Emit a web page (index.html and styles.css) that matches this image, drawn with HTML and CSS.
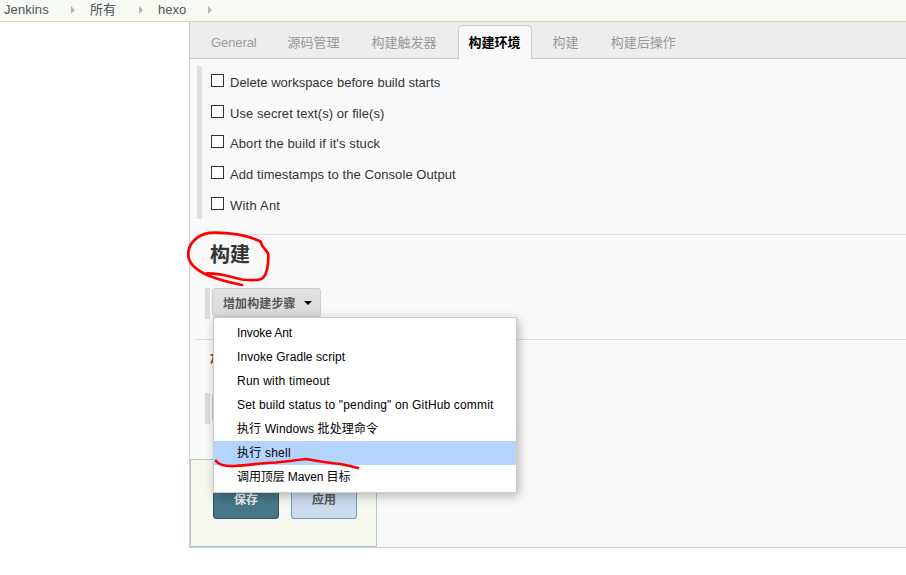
FILE: index.html
```html
<!DOCTYPE html>
<html lang="zh-CN">
<head>
<meta charset="utf-8">
<title>hexo Config [Jenkins]</title>
<link rel="stylesheet" href="styles.css">
</head>
<body>
<nav class="breadcrumbs">
  <a class="crumb crumb-home">Jenkins</a><i class="arrow"></i>
  <a class="crumb crumb-all">所有</a><i class="arrow"></i>
  <a class="crumb crumb-job">hexo</a><i class="arrow"></i>
</nav>
<main class="panel">
  <div class="tabs">
    <span class="tab tab-general">General</span>
    <span class="tab">源码管理</span>
    <span class="tab">构建触发器</span>
    <span class="tab active">构建环境</span>
    <span class="tab">构建</span>
    <span class="tab">构建后操作</span>
  </div>
  <div class="options">
    <label class="option"><i class="box"></i><span>Delete workspace before build starts</span></label>
    <label class="option"><i class="box"></i><span class="track-sm">Use secret text(s) or file(s)</span></label>
    <label class="option"><i class="box"></i><span class="track-md">Abort the build if it's stuck</span></label>
    <label class="option"><i class="box"></i><span class="track-sm">Add timestamps to the Console Output</span></label>
    <label class="option"><i class="box"></i><span class="track-lg">With Ant</span></label>
  </div>
  <section class="section">
    <h2 class="heading">构建</h2>
    <div class="step">
      <button class="add">增加构建步骤<i class="caret"></i></button>
      <div class="menu">
        <div class="item track-neg">Invoke Ant</div>
        <div class="item track-sm">Invoke Gradle script</div>
        <div class="item track-lg">Run with timeout</div>
        <div class="item track-menu">Set build status to "pending" on GitHub commit</div>
        <div class="item track-md">执行 Windows 批处理命令</div>
        <div class="item selected track-lg">执行 shell</div>
        <div class="item track-neg">调用顶层 Maven 目标</div>
      </div>
    </div>
  </section>
  <section class="section">
    <h2 class="heading heading-post">构</h2>
    <div class="step">
      <button class="add"></button>
    </div>
  </section>
  <div class="footer">
    <button class="btn save">保存</button>
    <button class="btn apply">应用</button>
  </div>
</main>
<svg class="ink" width="906" height="575" viewBox="0 0 906 575">
  <path d="M260.500 241.500C249 236 230 232 209 232.800C195 235.500 187.500 245 188.300 256C189.500 265 197 270 207 275C219 280 232 283 242 285M206 273.500C220 273 231 277 242 279.500C251 280.500 259 281 263 278C267.500 273 268.500 262 268.300 254C266 249 262 248 260.500 241.500"/>
  <path d="M216 461C219 465 225 466.500 235 466C250 465.500 262 462.500 276 462.500C287 461.500 295 460.500 306 459C320 461.500 329 463 340 464C347 465.500 352 466 358 468"/>
</svg>
</body>
</html>
```
FILE: styles.css
```css
* { box-sizing: border-box; }
body {
  margin: 0;
  height: 575px;
  overflow: hidden;
  background: #fff;
  color: #333;
  font: 13px/20px "Liberation Sans", "Noto Sans CJK SC", sans-serif;
}
.breadcrumbs {
  display: flex;
  align-items: center;
  height: 22px;
  padding: 0 0 2px 4px;
  background: #f6faf2;
  border-bottom: 1px solid #d3d7cf;
  color: #4d545d;
}
.crumb-home { width: 67px; letter-spacing: .1px; }
.crumb-all { width: 49px; }
.crumb-job { width: 50px; }
.arrow {
  border: 4px solid transparent;
  border-left-color: #b5b8b2;
  border-right: 0;
  margin-right: 15px;
}
.panel {
  display: flex;
  flex-direction: column;
  height: 526px;
  margin-left: 189px;
  background: #f9f9f9;
  border-left: 1px solid #ccc;
  border-bottom: 1px solid #ccc;
}
.tabs {
  display: flex;
  align-items: flex-end;
  height: 37px;
  padding-left: 10px;
  background: #ededed;
  border-bottom: 1px solid #ccc;
}
.tab {
  height: 34px;
  margin: 0 5px -1px;
  padding: 7px 10px 0;
  border: 1px solid transparent;
  border-bottom: 0;
  color: #999;
  white-space: nowrap;
}
.tab-general { padding-left: 5px; padding-right: 9px; letter-spacing: -.1px; }
.active {
  background: #f9f9f9;
  border-color: #ccc;
  border-radius: 5px 5px 0 0;
  color: #000;
  font-weight: bold;
}
.options {
  height: 153px;
  margin: 7px 0 15px 7px;
  padding-left: 9px;
  border-left: 5px solid #e0e0e0;
}
.option { display: flex; height: 30.7px; padding-top: 7px; }
.box {
  width: 13px;
  height: 13px;
  margin: 1px 6px 0 0;
  border: 1px solid #333;
  background: #fff;
}
.track-neg { letter-spacing: -.1px; }
.track-sm { letter-spacing: .07px; }
.track-md { letter-spacing: .11px; }
.track-menu { letter-spacing: .155px; }
.track-lg { letter-spacing: .22px; }
.section { height: 105px; margin-left: 5px; border-top: 1px solid #ddd; }
.heading { height: 40px; margin: 0 0 13px 15px; font-size: 20px; line-height: 40px; }
.heading-post { color: #6b5548; font-size: 18px; }
.step {
  position: relative;
  height: 31px;
  margin-left: 10px;
  padding-left: 2px;
  border-left: 5px solid #ddd;
}
.add {
  display: flex;
  align-items: center;
  width: 109px;
  height: 29px;
  padding: 0 0 0 10px;
  border: 1px solid #ccc;
  border-radius: 3px;
  background: linear-gradient(#e2e2e2, #dadada);
  color: #555;
  font: bold 12px "Liberation Sans", "Noto Sans CJK SC", sans-serif;
  letter-spacing: .1px;
  white-space: nowrap;
}
.caret {
  margin-left: 8px;
  border: 4px solid transparent;
  border-top-color: #000;
  border-bottom: 0;
}
.menu {
  position: absolute;
  z-index: 2;
  top: 29px;
  left: 3px;
  width: 304px;
  height: 176px;
  padding: 3px 0;
  border: 1px solid #ccc;
  background: #fff;
  box-shadow: 2px 3px 10px rgba(0, 0, 0, .27);
  color: #000;
  font-size: 12px;
  line-height: 24px;
  white-space: nowrap;
}
.item { height: 24px; padding-left: 23px; }
.selected { background: #b3d4ff; }
.footer {
  display: flex;
  gap: 12px;
  width: 187px;
  height: 88px;
  margin-top: auto;
  padding: 21px 0 0 22px;
  border: 1px solid #abd0bc;
  background: #f6f8ef;
}
.btn {
  width: 66px;
  height: 38px;
  padding: 0 0 4px;
  border-radius: 3px;
  font: bold 12px "Liberation Sans", "Noto Sans CJK SC", sans-serif;
}
.save { background: #457788; border: 1px solid #2c5766; color: #eee; }
.apply { background: #cadbed; border: 1px solid #6c9bd2; color: #555; }
.ink {
  position: absolute;
  inset: 0;
  z-index: 3;
  fill: none;
  stroke: #f00;
  stroke-width: 2.700;
  stroke-linecap: round;
  stroke-linejoin: round;
}
```
